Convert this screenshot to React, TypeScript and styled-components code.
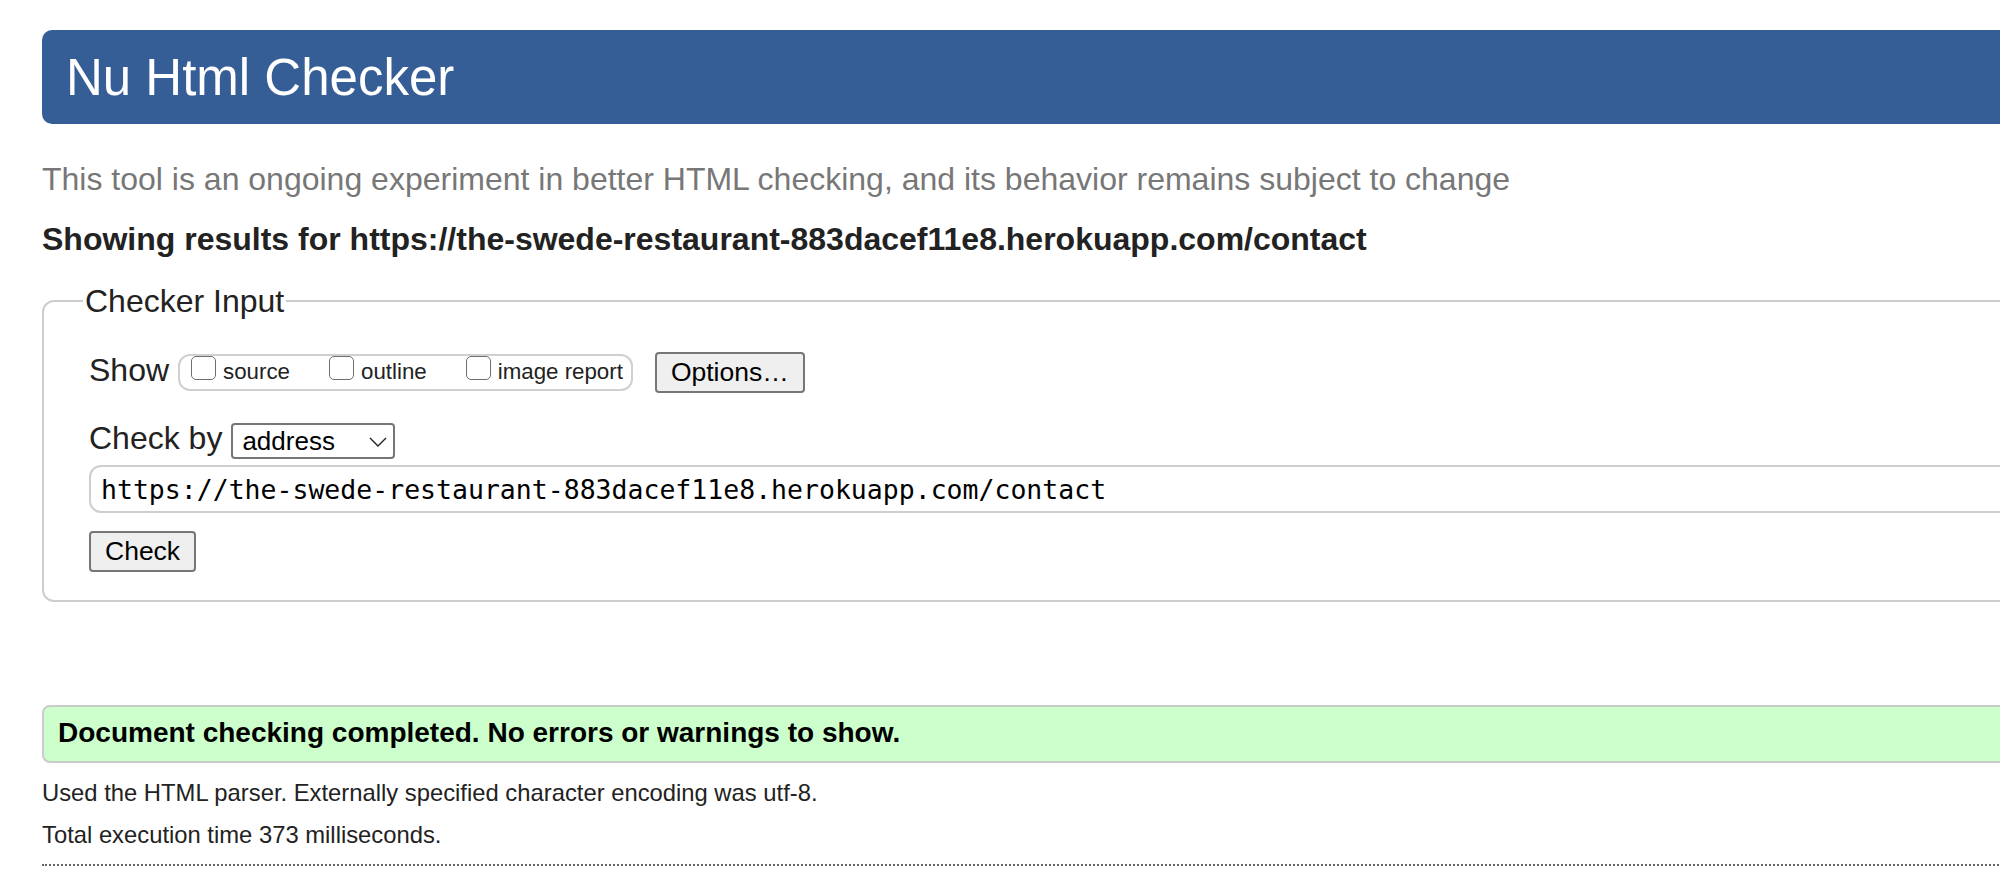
import React from 'react';
import styled, { createGlobalStyle } from 'styled-components';

const GlobalStyle = createGlobalStyle`
  html, body {
    margin: 0;
    padding: 0;
    background: #fff;
    overflow: hidden;
  }
  body {
    font-family: "Liberation Sans", Arial, Helvetica, sans-serif;
    color: #222;
  }
`;

const App = () => {
  const url = 'https://the-swede-restaurant-883dacef11e8.herokuapp.com/contact';

  return (
    <Page>
      <GlobalStyle />
      <Header>
        <Title>Nu Html Checker</Title>
      </Header>
      <Intro>
        This tool is an ongoing experiment in better HTML checking, and its behavior remains subject to change
      </Intro>
      <ResultsFor>Showing results for {url}</ResultsFor>

      <InputFieldset>
        <Legend>Checker Input</Legend>
        <Row>
          <RowLabel>Show</RowLabel>
          <ShowGroup>
            <ShowOption label="source" />
            <ShowOption label="outline" />
            <ShowOption label="image report" />
          </ShowGroup>
          <Button type="button" $left={22}>Options…</Button>
        </Row>
        <Row $top={30}>
          <RowLabel>Check by</RowLabel>
          <SelectWrap>
            <Select defaultValue="address">
              <option value="address">address</option>
              <option value="file">file upload</option>
              <option value="text">text input</option>
            </Select>
            <Chevron width="18" height="10" viewBox="0 0 18 10">
              <path d="M1 1 L9 9 L17 1" fill="none" stroke="#222" strokeWidth="1.4" />
            </Chevron>
          </SelectWrap>
        </Row>
        <UrlInput type="text" defaultValue={url} />
        <Button type="button" $top={18}>Check</Button>
      </InputFieldset>

      <Success>Document checking completed. No errors or warnings to show.</Success>
      <Info $top={15}>Used the HTML parser. Externally specified character encoding was utf-8.</Info>
      <Info $top={12}>Total execution time 373 milliseconds.</Info>
      <Divider />
    </Page>
  );
};

const ShowOption = ({ label }: { label: string }) => (
  <Option>
    <Box type="checkbox" />
    <OptionText>{label}</OptionText>
  </Option>
);

export default App;

const Page = styled.div`
  width: 2300px;
  padding: 30px 0 0 42px;
`;

const Header = styled.div`
  display: flex;
  align-items: center;
  height: 94px;
  padding-left: 24px;
  background: #365e96;
  border-radius: 10px;
`;

const Title = styled.h1`
  margin: 0;
  font-size: 51px;
  font-weight: normal;
  line-height: 1;
  color: #fff;
`;

const Intro = styled.p`
  margin: 37px 0 0;
  font-size: 32px;
  line-height: 36px;
  color: #777;
`;

const ResultsFor = styled.h2`
  margin: 25px 0 0;
  font-size: 32px;
  line-height: 35px;
  font-weight: bold;
  color: #222;
`;

const InputFieldset = styled.fieldset`
  margin: 26px 0 0;
  padding: 33px 0 28px 45px;
  border: 2px solid #cdcdcd;
  border-radius: 12px;
`;

const Legend = styled.legend`
  margin-left: -6px;
  padding: 0 2px;
  font-size: 32px;
  line-height: 36px;
  color: #222;
`;

const Row = styled.div<{ $top?: number }>`
  display: flex;
  align-items: center;
  margin-top: ${p => p.$top ?? 0}px;
`;

const RowLabel = styled.span`
  margin-right: 9px;
  padding-bottom: 6px;
  font-size: 32px;
  line-height: 30px;
  color: #222;
`;

const ShowGroup = styled.div`
  display: flex;
  gap: 39px;
  padding: 0 8px 5px 11px;
  border: 2px solid #d0d0d0;
  border-radius: 12px;
`;

const Option = styled.label`
  display: flex;
  align-items: flex-end;
  gap: 7px;
`;

const Box = styled.input`
  appearance: none;
  margin: 0 0 4px;
  width: 25px;
  height: 24px;
  border: 1.5px solid #6f6f6f;
  border-radius: 5px;
  background: #fff;
`;

const OptionText = styled.span`
  font-size: 22.3px;
  line-height: 24px;
  color: #222;
`;

const Button = styled.button<{ $top?: number; $left?: number }>`
  display: block;
  margin: ${p => p.$top ?? 0}px 0 0 ${p => p.$left ?? 0}px;
  height: 41px;
  padding: 0 14px;
  font-family: "Liberation Sans", Arial, Helvetica, sans-serif;
  font-size: 26.5px;
  color: #000;
  background: #efefef;
  border: 2px solid #767676;
  border-radius: 4px;
`;

const SelectWrap = styled.div`
  position: relative;
`;

const Select = styled.select`
  appearance: none;
  display: block;
  width: 164px;
  height: 36px;
  padding: 0 0 0 9px;
  font-family: "Liberation Sans", Arial, Helvetica, sans-serif;
  font-size: 26px;
  color: #000;
  background: #fff;
  border: 2px solid #767676;
  border-radius: 4px;
`;

const Chevron = styled.svg`
  position: absolute;
  top: 14px;
  right: 8px;
  pointer-events: none;
`;

const UrlInput = styled.input`
  display: block;
  box-sizing: border-box;
  margin-top: 6px;
  width: 2200px;
  height: 48px;
  padding: 0 10px;
  font-family: "DejaVu Sans Mono", "Liberation Mono", monospace;
  font-size: 26.5px;
  color: #000;
  border: 2px solid #cecece;
  border-radius: 12px;
  outline: none;
`;

const Success = styled.div`
  margin-top: 103px;
  padding: 11px 14px 13px;
  font-size: 28px;
  line-height: 30px;
  font-weight: bold;
  color: #000;
  background: #ccffcc;
  border: 2px solid #cbcbcb;
  border-radius: 8px;
`;

const Info = styled.p<{ $top?: number }>`
  margin: ${p => p.$top ?? 0}px 0 0;
  font-size: 23.8px;
  line-height: 30px;
  color: #222;
`;

const Divider = styled.hr`
  margin: 14px 0 0;
  border: none;
  border-top: 2px dotted #666;
`;
